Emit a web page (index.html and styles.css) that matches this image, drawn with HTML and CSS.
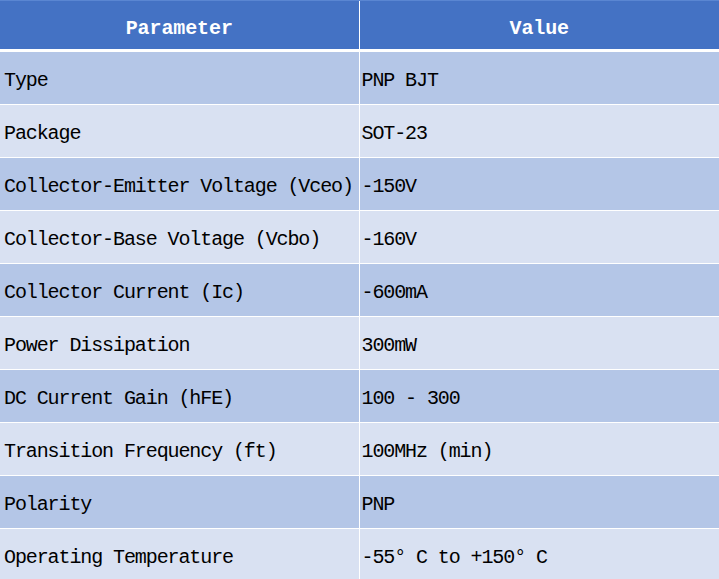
FILE: index.html
```html
<!DOCTYPE html>
<html lang="en">
<head>
<meta charset="utf-8">
<title>PNP BJT Parameters</title>
<link rel="stylesheet" href="styles.css">
</head>
<body>
<table class="spec">
  <colgroup><col class="c1"><col class="c2"></colgroup>
  <thead>
    <tr><th>Parameter</th><th>Value</th></tr>
  </thead>
  <tbody>
    <tr><td>Type</td><td>PNP BJT</td></tr>
    <tr><td>Package</td><td>SOT-23</td></tr>
    <tr><td>Collector-Emitter Voltage (Vceo)</td><td>-150V</td></tr>
    <tr><td>Collector-Base Voltage (Vcbo)</td><td>-160V</td></tr>
    <tr><td>Collector Current (Ic)</td><td>-600mA</td></tr>
    <tr><td>Power Dissipation</td><td>300mW</td></tr>
    <tr><td>DC Current Gain (hFE)</td><td>100 - 300</td></tr>
    <tr><td>Transition Frequency (ft)</td><td>100MHz (min)</td></tr>
    <tr><td>Polarity</td><td>PNP</td></tr>
    <tr><td>Operating Temperature</td><td>-55<span class="deg">°</span>C to +150<span class="deg">°</span>C</td></tr>
  </tbody>
</table>
</body>
</html>
```

FILE: styles.css
```css
html, body {
  margin: 0;
  padding: 0;
  background: #ffffff;
}

.spec {
  width: 719px;
  border-collapse: collapse;
  table-layout: fixed;
  font-family: "Liberation Mono", "Noto Sans Mono CJK SC", monospace;
  font-size: 20px;
  letter-spacing: -1.1px;
  color: #000000;
}

.c1 { width: 359px; }
.c2 { width: 360px; }

.spec th {
  height: 41px;
  padding: 7px 0 0 0;
  background: #4472c4;
  color: #ffffff;
  font-weight: bold;
  letter-spacing: -0.1px;
  text-align: center;
  vertical-align: middle;
  border-top: 1px solid #5a86d2;
  border-bottom: 3px solid #ffffff;
  border-left: 1px solid #ffffff;
}

.spec td {
  height: 48px;
  padding: 4px 0 0 4px;
  text-align: left;
  vertical-align: middle;
  border-bottom: 1px solid #ffffff;
  border-left: 1px solid #ffffff;
  white-space: nowrap;
}

.spec th:first-child,
.spec td:first-child {
  border-left: none;
}

.spec td:last-child {
  padding-left: 2px;
}

.spec tbody tr:nth-child(odd) td {
  background: #b4c6e7;
}

.spec tbody tr:nth-child(even) td {
  background: #d9e1f2;
}

.deg {
  letter-spacing: 9.8px;
}
```
